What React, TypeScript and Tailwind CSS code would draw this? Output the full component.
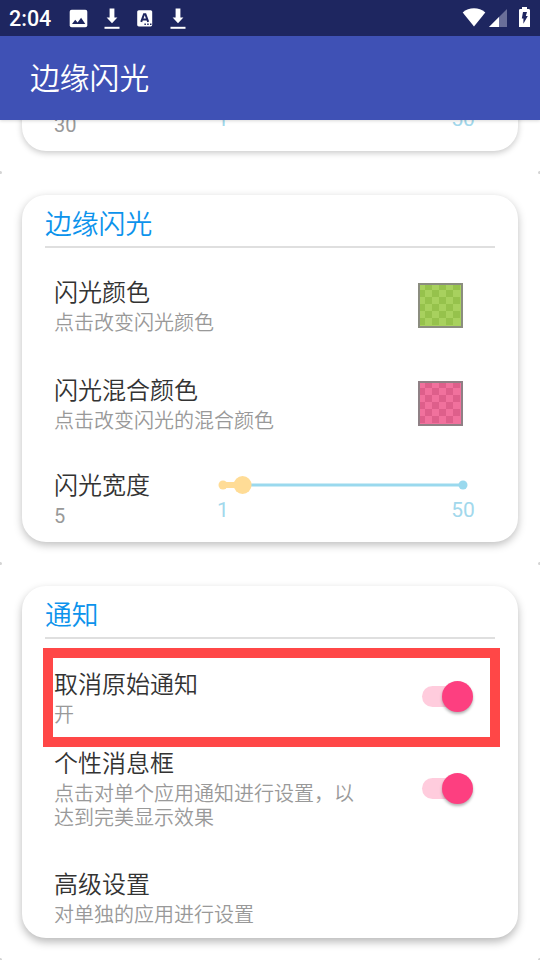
import { useState, type ReactNode } from "react";

const cjk = "font-['Noto_Sans_CJK_SC_DemiLight','Noto_Sans_CJK_SC','Roboto',sans-serif]";
const latin = "font-['Roboto','Noto_Sans_CJK_SC',sans-serif]";

function DownloadIcon() {
  return (
    <svg width="16" height="22" viewBox="0 0 16 22" fill="white">
      <path d="M5.600 .6h4.800v8.800h3L8 15.200 2.600 9.400h3z" />
      <path d="M.5 18.800h15v2H.5z" />
    </svg>
  );
}

function StatusBar() {
  return (
    <div className="flex h-9 items-start justify-between bg-[#1e2660] text-white">
      <div className="flex">
        <span className={`ml-[9px] mt-1 w-[60px] text-[21.5px] font-medium leading-[29px] ${latin}`}>2:04</span>
        <svg className="mt-[9px]" width="19" height="19" viewBox="0 0 19 19">
          <rect x=".7" y=".7" width="17.600" height="17.600" rx="2" fill="white" />
          <path d="M3 15l3.200-4.300 2.400 2.800 3.500-4.700 4.200 6.200z" fill="#1e2660" />
        </svg>
        <div className="ml-[16px] mt-2"><DownloadIcon /></div>
        <svg className="ml-[16px] mt-[9px]" width="18" height="19" viewBox="0 0 18 19">
          <rect x="1.200" y="1.200" width="15" height="16.200" rx="1.600" fill="white" />
          <path d="M5.200 12.800L8 5.200h1.400l2.800 7.600M6.400 10.600h4.800" fill="none" stroke="#1e2660" strokeWidth="2" />
          <path d="M8.400 14.600h1.500v1.500H8.400zM11.200 14.600h1.500v1.500h-1.500zM14 14.600h1.500v1.500H14z" fill="#1e2660" />
        </svg>
        <div className="ml-[16px] mt-2"><DownloadIcon /></div>
      </div>
      <div className="flex pr-[9px]">
        <svg className="mt-[7px]" width="24" height="20" viewBox="0 0 24 20">
          <path d="M.7 5.400C7-.1 17-.1 23.300 5.400L12 19.400z" fill="white" />
        </svg>
        <svg className="ml-[2px] mt-2" width="20" height="20" viewBox="0 0 20 20">
          <path d="M1 19L19 1v18z" fill="#6a6f99" />
          <path d="M1 19L11 9v10z" fill="white" />
        </svg>
        <svg className="ml-[10px] mt-[7px]" width="13" height="20" viewBox="0 0 13 20">
          <path d="M4 0h5v2h1.700c.7 0 1.300.6 1.300 1.300V20H1V3.300C1 2.600 1.600 2 2.300 2H4z" fill="white" />
          <path d="M5 5h4L7.800 9h2L5.400 16.800V11.500H3.800z" fill="#1e2660" />
        </svg>
      </div>
    </div>
  );
}

function Gap() {
  return (
    <div className="flex h-11 shrink-0 items-center justify-between pb-0.5">
      <span className="h-[3px] w-[2px] rounded-r-full bg-[#d4d4d4]" />
      <span className="h-[3px] w-[2px] rounded-l-full bg-[#d4d4d4]" />
    </div>
  );
}

function Card({ title, className, children }: { title: string; className: string; children: ReactNode }) {
  return (
    <section className={`mx-[22px] shrink-0 rounded-[24px] bg-white px-[23px] ${className}`}>
      <h2 className="h-[53px] border-b-2 border-[#dfdfdf] text-[26.8px] leading-[55px] text-[#0c93ec]">{title}</h2>
      {children}
    </section>
  );
}

function Row({ title, summary, className, children }: { title: string; summary: string; className: string; children?: ReactNode }) {
  return (
    <div className={`flex items-start justify-between pl-[9px] ${className}`}>
      <div className="w-[312px]">
        <h3 className="mb-0.5 text-[24px] leading-[34px] text-[#333]">{title}</h3>
        <p className="text-[20px] leading-6 text-[#999]">{summary}</p>
      </div>
      {children}
    </div>
  );
}

function Swatch({ light, dark, border }: { light: string; dark: string; border: string }) {
  const edges = [0, 5, 12, 19, 26, 33, 40];
  return (
    <svg className="mr-8 mt-[9px] shrink-0" width="45" height="45" viewBox="0 0 45 45">
      <rect width="45" height="45" fill={border} />
      <g transform="translate(2 2)">
        <rect width="41" height="41" fill={light} />
        {edges.slice(0, 6).map((y, r) =>
          edges.slice(0, 6).map((x, c) =>
            (r + c) % 2 === 0 ? null : (
              <rect key={`${r}-${c}`} x={x} y={y} width={edges[c + 1] - x} height={edges[r + 1] - y} fill={dark} />
            )
          )
        )}
      </g>
    </svg>
  );
}

function SliderLabels() {
  return (
    <div className={`flex justify-between text-[21px] font-normal leading-6 text-[#a2d8ec] ${latin}`}>
      <span className="w-6 text-center">1</span>
      <span className="w-6 text-center">50</span>
    </div>
  );
}

function Slider({ value }: { value: number }) {
  const x = 12 + ((value - 1) / 49) * 240;
  return (
    <div className="mr-5 mt-[7px] w-[264px] shrink-0">
      <svg className="block" width="264" height="24" viewBox="0 0 264 24">
        <path d="M12 11h240" stroke="#9ad9ee" strokeWidth="3.200" />
        <circle cx="252" cy="11" r="4.500" fill="#9ad9ee" />
        <path d={`M12 11H${x}`} stroke="#ffdc96" strokeWidth="6" />
        <circle cx="12" cy="11" r="4.500" fill="#ffdc96" />
        <circle cx={x} cy="11" r="9" fill="#ffdc96" />
      </svg>
      <SliderLabels />
    </div>
  );
}

function Toggle({ className }: { className: string }) {
  const [on, setOn] = useState(true);
  return (
    <button
      aria-pressed={on}
      onClick={() => setOn(!on)}
      className={`mr-[22px] flex h-[21px] w-[51px] shrink-0 items-center rounded-full bg-[linear-gradient(to_right,#ffccdd_45px,transparent_45px)] ${on ? "justify-end" : "justify-start"} ${className}`}
    >
      <span className="h-[31px] w-[31px] shrink-0 rounded-full bg-[#fd3f80] shadow-[0_2px_3px_rgba(0,0,0,0.3)]" />
    </button>
  );
}

export default function App() {
  return (
    <div className={`flex h-[960px] w-[540px] flex-col overflow-hidden bg-white font-[350] ${cjk}`}>
      <header className="z-10 shrink-0 shadow-[0_1px_3px_rgba(0,0,0,0.15)]">
        <StatusBar />
        <h1 className="h-[84px] bg-[#3f51b5] pl-[30px] text-[29.8px] font-[350] leading-[80px] text-white">边缘闪光</h1>
      </header>

      <main className="flex min-h-0 flex-1 flex-col overflow-hidden">
        <section className="mx-[22px] -mt-7 flex h-[59px] shrink-0 items-start justify-between rounded-b-[24px] bg-white pl-8 pr-[43px] shadow-[0_2px_6px_rgba(0,0,0,0.22)]">
          <span className={`mt-[21px] text-[20px] font-normal leading-6 text-[#999] ${latin}`}>30</span>
          <div className="mt-[15px] w-[264px]"><SliderLabels /></div>
        </section>
        <Gap />

        <Card title="边缘闪光" className="h-[347px] shadow-[0_3px_8px_rgba(0,0,0,0.26)]">
          <Row title="闪光颜色" summary="点击改变闪光颜色" className="mt-[26px] h-[98px]">
            <Swatch light="#a8d15e" dark="#96c24c" border="#8b8d7f" />
          </Row>
          <Row title="闪光混合颜色" summary="点击改变闪光的混合颜色" className="h-[95px]">
            <Swatch light="#f1719d" dark="#de5f8b" border="#8f8085" />
          </Row>
          <div className="flex items-start justify-between pl-[9px]">
            <div>
              <h3 className="mb-[3px] text-[24px] leading-[34px] text-[#333]">闪光宽度</h3>
              <p className={`text-[20px] font-normal leading-6 text-[#999] ${latin}`}>5</p>
            </div>
            <Slider value={5} />
          </div>
        </Card>
        <Gap />

        <Card title="通知" className="h-[352px] shadow-[0_4px_9px_rgba(0,0,0,0.28)]">
          <div className="-ml-0.5 -mr-[5px] mt-[9px] h-[99px] border-[10px] border-[#ff4747]">
            <Row title="取消原始通知" summary="开" className="-ml-2 -mr-[5px] mt-2">
              <Toggle className="mt-5" />
            </Row>
          </div>
          <Row title="个性消息框" summary="点击对单个应用通知进行设置，以达到完美显示效果" className="-mt-0.5 h-[121px]">
            <Toggle className="mt-[33px]" />
          </Row>
          <Row title="高级设置" summary="对单独的应用进行设置" className="" />
        </Card>
        <Gap />
      </main>
    </div>
  );
}
